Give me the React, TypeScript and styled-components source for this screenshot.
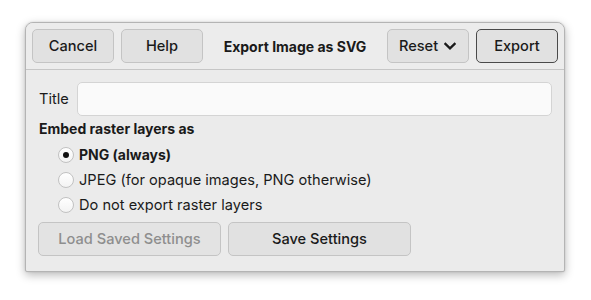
import styled, { createGlobalStyle } from 'styled-components';

const GlobalStyle = createGlobalStyle`
    html, body {
        margin: 0;
        padding: 0;
        background: #ffffff;
    }
    body {
        font-family: Inter, "Noto Sans", "Liberation Sans", sans-serif;
        font-size: 14.6px;
        color: #1a1a1a;
    }
`;

const Page = styled.div`
    width: 591px;
    height: 300px;
    padding: 22px 0 0 25px;
    box-sizing: border-box;
`;

const Window = styled.div`
    width: 540px;
    height: 250px;
    box-sizing: border-box;
    display: flex;
    flex-direction: column;
    background: #ebebeb;
    border: 1px solid #b4b4b4;
    border-radius: 8px 8px 2px 2px;
    box-shadow: 0 3px 10px rgba(0, 0, 0, 0.28), 0 0 2px rgba(0, 0, 0, 0.12);
    overflow: hidden;
`;

const HeaderBar = styled.div`
    height: 47px;
    box-sizing: border-box;
    display: flex;
    align-items: center;
    gap: 7px;
    padding: 0 6px;
    background: #ececec;
    border-bottom: 1px solid #c6c6c6;
`;

const Button = styled.button<{ $width: number; $primary?: boolean; $disabled?: boolean }>`
    width: ${p => p.$width}px;
    height: 34px;
    box-sizing: border-box;
    display: flex;
    align-items: center;
    justify-content: center;
    gap: 5px;
    padding: 0;
    font-family: inherit;
    font-size: 14.6px;
    font-weight: 500;
    color: ${p => (p.$disabled ? '#8e8e8e' : '#1a1a1a')};
    background: ${p => (p.$disabled ? '#e3e3e3' : '#e1e1e1')};
    border: 1px solid ${p => (p.$primary ? '#4a4a4a' : '#c4c4c4')};
    border-radius: 5px;
`;

const HeaderTitle = styled.div`
    flex: 1;
    text-align: center;
    font-weight: 700;
    font-size: 14px;
`;

const Body = styled.div`
    flex: 1;
    display: flex;
    flex-direction: column;
    padding: 12px 12px 0 12px;
`;

const FieldRow = styled.div`
    display: flex;
    align-items: center;
    gap: 8px;
`;

const Label = styled.span`
    padding-left: 1px;
`;

const TextInput = styled.div`
    flex: 1;
    height: 34px;
    box-sizing: border-box;
    background: #fafafa;
    border: 1px solid #d4d4d4;
    border-radius: 5px;
`;

const SectionTitle = styled.div`
    font-weight: 700;
    font-size: 14px;
    margin-top: 4px;
    padding-left: 1px;
    line-height: 18px;
`;

const RadioList = styled.div`
    display: flex;
    flex-direction: column;
    gap: 6px;
    padding: 7px 0 0 20px;
`;

const RadioRow = styled.label<{ $checked?: boolean }>`
    display: flex;
    align-items: center;
    gap: 5px;
    height: 19px;
    font-weight: ${p => (p.$checked ? 700 : 400)};
    font-size: ${p => (p.$checked ? '14px' : '14.6px')};
`;

const RadioCircle = styled.span<{ $checked?: boolean }>`
    width: 16px;
    height: 16px;
    box-sizing: border-box;
    border-radius: 50%;
    border: 1px solid #c2c2c2;
    background: linear-gradient(#ffffff, #f3f3f3);
    display: flex;
    align-items: center;
    justify-content: center;

    &::after {
        content: '';
        display: ${p => (p.$checked ? 'block' : 'none')};
        width: 6px;
        height: 6px;
        border-radius: 50%;
        background: #111;
    }
`;

const ButtonRow = styled.div`
    display: flex;
    gap: 7px;
    margin-top: 8px;
`;

const Chevron = () => (
    <svg width="14" height="10" viewBox="0 0 14 10">
        <path d="M1.6 2.2 L7 7.4 L12.4 2.2" fill="none" stroke="#1a1a1a" strokeWidth="2.3" />
    </svg>
);

const options = [
    { label: 'PNG (always)', checked: true },
    { label: 'JPEG (for opaque images, PNG otherwise)', checked: false },
    { label: 'Do not export raster layers', checked: false },
];

export default function App() {
    return (
        <>
            <GlobalStyle />
            <Page>
                <Window>
                    <HeaderBar>
                        <Button $width={82}>Cancel</Button>
                        <Button $width={82}>Help</Button>
                        <HeaderTitle>Export Image as SVG</HeaderTitle>
                        <Button $width={82}>
                            Reset <Chevron />
                        </Button>
                        <Button $width={82} $primary>
                            Export
                        </Button>
                    </HeaderBar>
                    <Body>
                        <FieldRow>
                            <Label>Title</Label>
                            <TextInput />
                        </FieldRow>
                        <SectionTitle>Embed raster layers as</SectionTitle>
                        <RadioList>
                            {options.map(o => (
                                <RadioRow key={o.label} $checked={o.checked}>
                                    <RadioCircle $checked={o.checked} />
                                    {o.label}
                                </RadioRow>
                            ))}
                        </RadioList>
                        <ButtonRow>
                            <Button $width={183} $disabled>
                                Load Saved Settings
                            </Button>
                            <Button $width={183}>Save Settings</Button>
                        </ButtonRow>
                    </Body>
                </Window>
            </Page>
        </>
    );
}
